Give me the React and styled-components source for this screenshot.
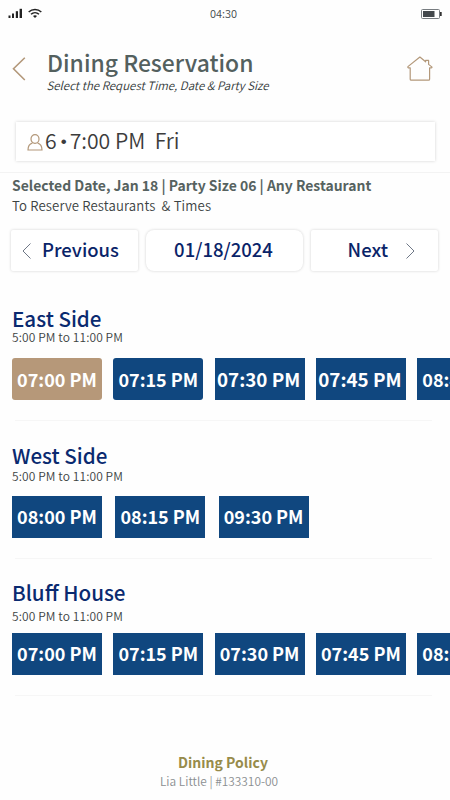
import styled, { createGlobalStyle } from "styled-components";

const GlobalStyle = createGlobalStyle`
  * {
    box-sizing: border-box;
  }
  body {
    margin: 0;
    background: #fefefe;
    font-family: "Noto Sans CJK SC", "Open Sans", sans-serif;
  }
`;

const Screen = styled.div`
  width: 450px;
  height: 800px;
  overflow: hidden;
  display: flex;
  flex-direction: column;
  background: #fefefe;
`;

const StatusBar = styled.div`
  height: 27px;
  padding: 0 8px 2px 8px;
  display: grid;
  grid-template-columns: 1fr auto 1fr;
  align-items: center;
  svg {
    margin-top: 2px;
  }
`;

const Signals = styled.div`
  display: flex;
  gap: 5px;
`;

const Clock = styled.span`
  font-size: 11px;
  font-weight: 350;
  line-height: 14px;
  color: #444a4c;
  padding-right: 3px;
`;

const BatterySlot = styled.div`
  display: flex;
  justify-content: flex-end;
`;

const Header = styled.header`
  height: 95px;
  padding: 22px 17px 0 12px;
  display: flex;
`;

const HeaderIcon = styled.svg`
  flex: none;
  margin-top: ${(props) => props.$top}px;
`;

const Titles = styled.div`
  flex: 1;
  padding-left: 21px;
`;

const Title = styled.h1`
  margin: 0;
  font-size: 22.9px;
  font-weight: 500;
  line-height: 26px;
  color: #53605e;
`;

const Subtitle = styled.div`
  margin: 2px 0 0 -0.5px;
  font-size: 11.5px;
  font-weight: 350;
  line-height: 16px;
  font-style: italic;
  color: #343a3a;
`;

const SearchBox = styled.div`
  flex: none;
  height: 39px;
  margin: 0 15px 0 16px;
  padding: 0 11px 4px;
  display: flex;
  align-items: center;
  background: #fff;
  box-shadow: 0 0 3px rgba(0, 0, 0, 0.18);
  font-size: 21.2px;
  font-weight: 350;
  line-height: 30px;
  color: #3c3c3c;
  white-space: pre;
  svg {
    margin: 5px 2px 0 0;
  }
`;

const Dot = styled.span`
  width: 13px;
  padding: 5px 0 0 1px;
  text-align: center;
  font-family: "Liberation Sans", sans-serif;
  font-size: 17px;
`;

const Summary = styled.div`
  flex: none;
  height: 58px;
  margin-top: 11px;
  padding: 3px 12px 0;
  border-top: 1px solid #f3f3f3;
`;

const SummaryTitle = styled.div`
  font-size: 13.95px;
  font-weight: 700;
  line-height: 18px;
  color: #566260;
`;

const SummaryNote = styled.div`
  margin-top: 3px;
  font-size: 13.2px;
  font-weight: 350;
  line-height: 18px;
  letter-spacing: 0.13px;
  color: #3c4343;
  white-space: pre;
`;

const DateNav = styled.div`
  flex: none;
  height: 50px;
  padding: 0 12px 9px 11px;
  display: grid;
  grid-template-columns: 127px 157px 127px;
  justify-content: space-between;
`;

const NavButton = styled.button`
  display: flex;
  align-items: center;
  justify-content: ${(props) => props.$align || "center"};
  gap: ${(props) => props.$gap || 0}px;
  padding: ${(props) => props.$pad || "0 2px 4px 0"};
  border: 0;
  border-radius: ${(props) => (props.$round ? 8 : 2)}px;
  background: #fff;
  box-shadow: 0 0 3px rgba(0, 0, 0, 0.18);
  font-family: inherit;
  font-size: 18.5px;
  font-weight: 500;
  line-height: 24px;
  color: #0a2469;
  svg {
    margin-top: 5px;
  }
`;

const Restaurant = styled.section`
  flex: none;
  height: ${(props) => props.$height}px;
  padding: ${(props) => props.$top}px 0 0 12px;
`;

const Name = styled.h2`
  margin: 0;
  font-size: 20.6px;
  font-weight: 500;
  line-height: 26px;
  color: #0a2a70;
`;

const Hours = styled.div`
  margin-top: ${(props) => props.$top}px;
  font-size: 12px;
  font-weight: 350;
  line-height: 16px;
  letter-spacing: 0.1px;
  color: #3c4343;
`;

const Slots = styled.div`
  display: flex;
  gap: ${(props) => props.$gap}px;
  margin-top: ${(props) => props.$top}px;
  overflow: hidden;
`;

const Slot = styled.button`
  flex: none;
  width: 90px;
  height: 42px;
  padding: ${(props) => (props.$large ? "0 2px 1px 0" : `0 0 ${props.$lift}px`)};
  border: 0;
  border-radius: ${(props) => (props.$round ? 3 : 0)}px;
  background: ${(props) => (props.$selected ? "#b69879" : "#10477f")};
  font-family: inherit;
  font-size: ${(props) => (props.$large ? 18.8 : 18)}px;
  font-weight: 700;
  line-height: 24px;
  color: #fff;
  white-space: nowrap;
`;

const Divider = styled.div`
  height: 1px;
  margin: 20px 18px 0 3px;
  background: #f6f6f6;
`;

const Footer = styled.footer`
  padding-top: 57px;
  padding-right: 4px;
  text-align: center;
`;

const Policy = styled.div`
  font-size: 14px;
  font-weight: 700;
  line-height: 18px;
  color: #978b4a;
`;

const Member = styled.div`
  margin-top: 1px;
  padding-right: 8px;
  font-size: 11.9px;
  font-weight: 350;
  line-height: 18px;
  color: #8b8f91;
`;

const restaurants = [
  {
    name: "East Side",
    height: 140,
    top: 25,
    hoursTop: -2,
    slotsTop: 13,
    gap: 11.3,
    lift: 1,
    rounded: 2,
    selected: 0,
    large: [2, 3],
    slots: ["07:00 PM", "07:15 PM", "07:30 PM", "07:45 PM", "08:45 PM"],
  },
  {
    name: "West Side",
    height: 138,
    top: 22,
    hoursTop: 0,
    slotsTop: 12,
    gap: 13.3,
    lift: 2,
    slots: ["08:00 PM", "08:15 PM", "09:30 PM"],
  },
  {
    name: "Bluff House",
    height: 138,
    top: 21,
    hoursTop: 3,
    slotsTop: 9,
    gap: 11.3,
    lift: 2,
    slots: ["07:00 PM", "07:15 PM", "07:30 PM", "07:45 PM", "08:00 PM"],
  },
];

const Chevron = ({ right }) => (
  <svg width="9" height="16" viewBox="0 0 9 16" fill="none" stroke="#5d6878" strokeWidth="0.9">
    <path d={right ? "M0.5 0.5L8 8L0.5 15.5" : "M8.5 0.5L1 8L8.5 15.5"} />
  </svg>
);

const App = () => {
  return (
    <>
      <GlobalStyle />
      <Screen>
        <StatusBar>
          <Signals>
            <svg width="15" height="11" viewBox="0 0 15 11" fill="#222">
              <rect x="0.5" y="7.5" width="2" height="2.5" />
              <rect x="4" y="5.5" width="2" height="4.5" />
              <rect x="7.8" y="3.2" width="2.2" height="6.8" />
              <rect x="11.6" y="0.8" width="2.4" height="9.2" />
            </svg>
            <svg width="14" height="11" viewBox="0 0 14 11" fill="none" stroke="#222" strokeWidth="1.5">
              <path d="M0.7 4C4.2 0.5 9.8 0.5 13.3 4" />
              <path d="M3 6.3C5.3 4.2 8.7 4.2 11 6.3" />
              <path d="M5 8L7 10L9 8C8 7.1 6 7.1 5 8Z" fill="#222" stroke="none" />
            </svg>
          </Signals>
          <Clock>04:30</Clock>
          <BatterySlot>
            <svg width="21" height="10" viewBox="0 0 21 10">
              <rect x="0.5" y="0.5" width="18" height="9" rx="1" fill="none" stroke="#777c80" />
              <rect x="2" y="2" width="11.5" height="6" fill="#43484c" />
              <rect x="19" y="3" width="1.7" height="4" fill="#333" />
            </svg>
          </BatterySlot>
        </StatusBar>

        <Header>
          <HeaderIcon $top={8} width="14" height="24" viewBox="0 0 14 24" fill="none" stroke="#b3987a" strokeWidth="1.6">
            <path d="M12.8 0.7L1.5 11.8L12.8 23" />
          </HeaderIcon>
          <Titles>
            <Title>Dining Reservation</Title>
            <Subtitle>Select the Request Time, Date &amp; Party Size</Subtitle>
          </Titles>
          <HeaderIcon $top={6.5} width="26" height="25" viewBox="0 0 26 25" fill="none" stroke="#b3987a" strokeWidth="1.2" strokeLinejoin="round">
            <path d="M3.2 11.8H1.2C0.6 11.4 0.8 10.8 1.2 10.4L12.9 1L18.6 5.8V4.4H21.6V8.4L24.8 10.9C25.2 11.5 24.8 11.8 24.3 11.8H22.6V23.2Q22.6 24.2 21.6 24.2H4.2Q3.2 24.2 3.2 23.2Z" />
          </HeaderIcon>
        </Header>

        <SearchBox>
          <svg width="16" height="17" viewBox="0 0 16 17" fill="none" stroke="#b3987a" strokeWidth="1.2">
            <ellipse cx="8" cy="5" rx="4" ry="4.4" />
            <path d="M5.4 9.2C2.6 10 1 12 1 16H15C15 12 13.4 10 10.6 9.2" />
          </svg>
          <span>6</span>
          <Dot>•</Dot>
          <span>7:00 PM  Fri</span>
        </SearchBox>

        <Summary>
          <SummaryTitle>Selected Date, Jan 18 | Party Size 06 | Any Restaurant</SummaryTitle>
          <SummaryNote>To Reserve Restaurants  &amp; Times</SummaryNote>
        </Summary>

        <DateNav>
          <NavButton $gap={11} $align="flex-start" $pad="0 0 4px 11px">
            <Chevron />
            Previous
          </NavButton>
          <NavButton $round>01/18/2024</NavButton>
          <NavButton $gap={18} $align="flex-end" $pad="0 23px 4px 0">
            Next
            <Chevron right />
          </NavButton>
        </DateNav>

        {restaurants.map((r) => (
          <Restaurant key={r.name} $height={r.height} $top={r.top}>
            <Name>{r.name}</Name>
            <Hours $top={r.hoursTop}>5:00 PM to 11:00 PM</Hours>
            <Slots $gap={r.gap} $top={r.slotsTop}>
              {r.slots.map((time, i) => (
                <Slot
                  key={time}
                  $lift={r.lift}
                  $round={i < r.rounded}
                  $selected={i === r.selected}
                  $large={r.large?.includes(i)}
                >
                  {time}
                </Slot>
              ))}
            </Slots>
            <Divider />
          </Restaurant>
        ))}

        <Footer>
          <Policy>Dining Policy</Policy>
          <Member>Lia Little | #133310-00</Member>
        </Footer>
      </Screen>
    </>
  );
};

export default App;
